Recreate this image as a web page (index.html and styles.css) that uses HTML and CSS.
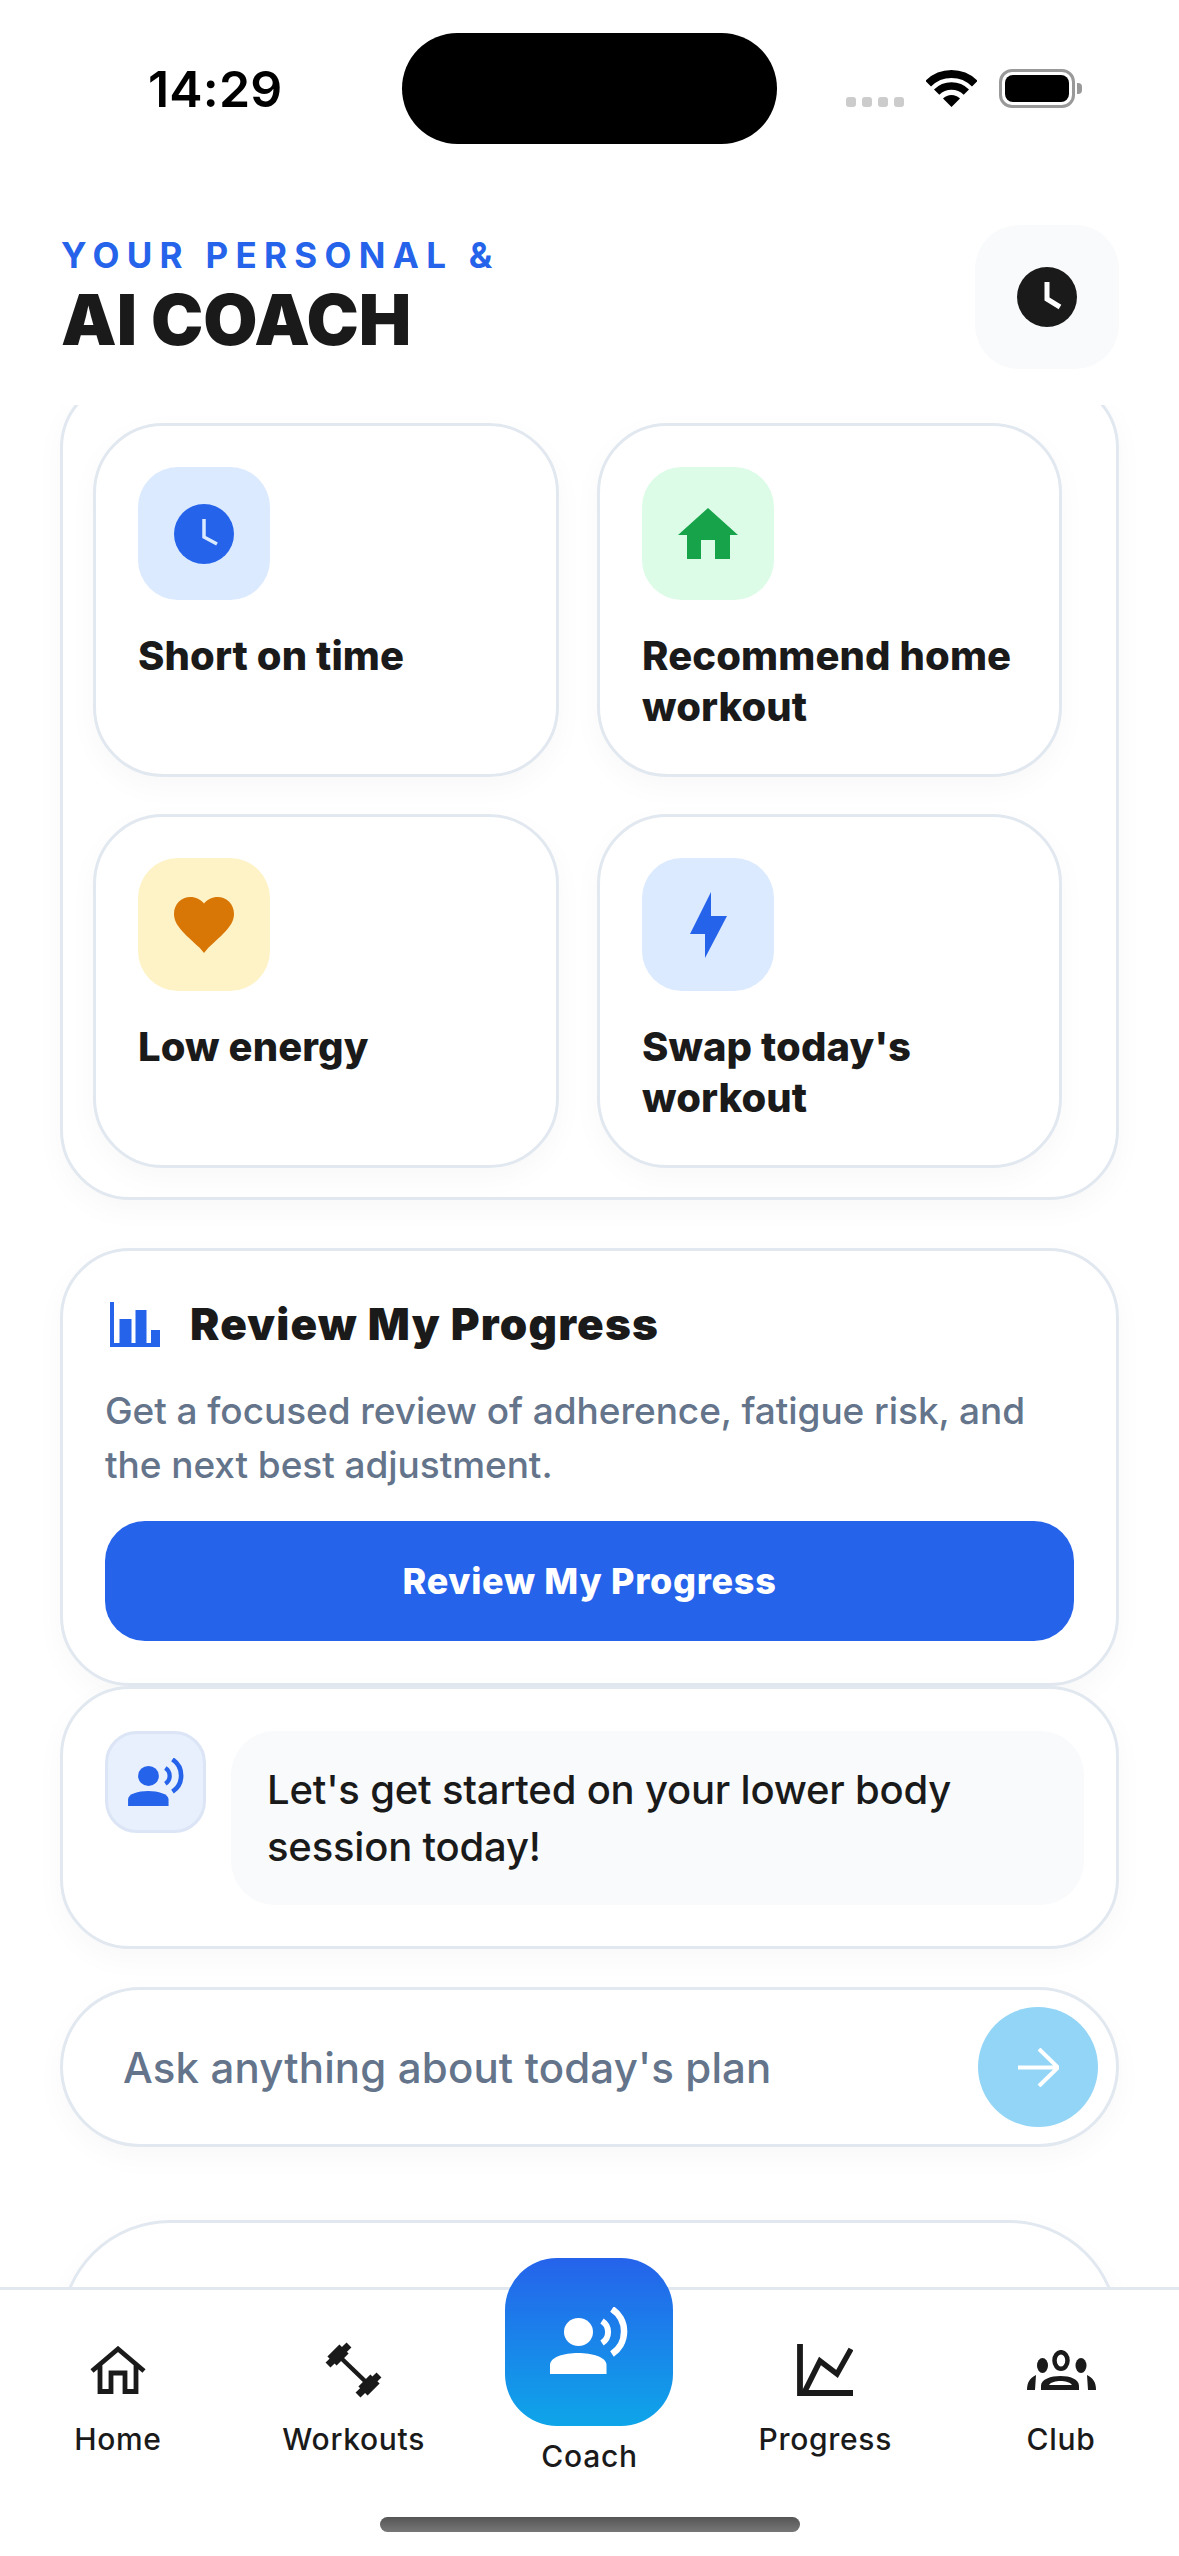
FILE: index.html
```html
<!DOCTYPE html>
<html lang="en">
  <head>
    <meta charset="utf-8">
    <title>AI Coach</title>
    <link rel="stylesheet" href="styles.css">
  </head>
  <body>
    <!-- shared person + voice waves glyph -->
    <svg class="defs" width="0" height="0">
      <symbol id="coach-glyph" viewBox="0 0 78 67">
        <ellipse cx="28.5" cy="25" rx="14.5" ry="14" fill="currentColor"/>
        <path d="M0 67V58C0 50 14 46 28 46S56.500 50 56.500 58V67Z" fill="currentColor"/>
        <path d="M52 14A13 13 0 0 1 52 36" fill="none" stroke="currentColor" stroke-width="6"/>
        <path d="M62 2A27 27 0 0 1 62 47" fill="none" stroke="currentColor" stroke-width="6.500"/>
      </symbol>
    </svg>

    <div class="phone">
      <div class="status">
        <div class="time">14:29</div>
        <div class="island"></div>
        <div class="status-icons">
          <div class="signal"><i></i><i></i><i></i><i></i></div>
          <svg class="wifi" width="51" height="37" viewBox="0 0 51 37">
            <path d="M2.200 13.700A33 33 0 0 1 48.800 13.700" fill="none" stroke="#000" stroke-width="8"/>
            <path d="M10.650 22.150A21 21 0 0 1 40.350 22.150" fill="none" stroke="#000" stroke-width="7.500"/>
            <path d="M25.500 37L17 28.500A12 12 0 0 1 34 28.500Z"/>
          </svg>
          <div class="battery"><div class="battery-fill"></div></div>
          <div class="battery-nub"></div>
        </div>
      </div>

      <div class="header">
        <div>
          <div class="eyebrow">YOUR PERSONAL &amp;</div>
          <h1 class="title">AI COACH</h1>
        </div>
        <div class="history-btn">
          <svg width="60" height="60" viewBox="0 0 60 60">
            <circle cx="30" cy="30" r="30" fill="#1a1a1a"/>
            <path d="M30 15V32L43 40" fill="none" stroke="#fff" stroke-width="5"/>
          </svg>
        </div>
      </div>

      <div class="scroll">
        <div class="panel">
          <div class="quick-grid">
            <div class="quick-card">
              <div class="tile tile-blue">
                <svg width="60" height="60" viewBox="0 0 60 60">
                  <circle cx="30" cy="30" r="30" fill="#2563eb"/>
                  <path d="M30 15V33L43 40" fill="none" stroke="#dbeafe" stroke-width="3.500"/>
                </svg>
              </div>
              <div class="quick-label">Short on time</div>
            </div>
            <div class="quick-card">
              <div class="tile tile-green">
                <svg width="60" height="51" viewBox="0 0 60 51">
                  <path d="M30 0L60 27H52V51H37V32H23V51H9V27H0Z" fill="#16a34a"/>
                </svg>
              </div>
              <div class="quick-label">Recommend home workout</div>
            </div>
            <div class="quick-card">
              <div class="tile tile-amber">
                <svg width="60" height="56" viewBox="2 3 20 18.350" preserveAspectRatio="none">
                  <path d="M12 21.350l-1.450-1.700C5.400 15 2 12.280 2 8.500 2 5.420 4.420 3 7.500 3c1.740 0 3.410.810 4.500 2.090C13.090 3.810 14.760 3 16.500 3 19.580 3 22 5.420 22 8.500c0 3.780-3.400 6.500-8.550 11.150z" fill="#d97706"/>
                </svg>
              </div>
              <div class="quick-label">Low energy</div>
            </div>
            <div class="quick-card">
              <div class="tile tile-blue">
                <svg width="37" height="66" viewBox="0 0 37 66">
                  <path d="M21 0L0 42H15V66L37 24H21Z" fill="#2563eb"/>
                </svg>
              </div>
              <div class="quick-label">Swap today's workout</div>
            </div>
          </div>
        </div>

        <div class="review-card">
          <div class="review-head">
            <svg width="50" height="45" viewBox="0 0 50 45">
              <path d="M0 0H4V41H9.500V17H21.500V41H25.500V8H36.500V41H41V28H50V45H0Z" fill="#2563eb"/>
            </svg>
            <h2 class="review-title">Review My Progress</h2>
          </div>
          <p class="review-text">Get a focused review of adherence, fatigue risk, and the next best adjustment.</p>
          <div class="review-btn">Review My Progress</div>
        </div>

        <div class="chat-card">
          <div class="avatar">
            <svg width="56" height="48"><use href="#coach-glyph"/></svg>
          </div>
          <div class="bubble">Let's get started on your lower body session today!</div>
        </div>

        <div class="ask-box">
          <div class="ask-text">Ask anything about today's plan</div>
          <div class="send-btn">
            <svg width="41" height="39" viewBox="0 0 41 39">
              <path d="M0 19.500H39M21 1L40 19.500L21 38" fill="none" stroke="#fff" stroke-width="4"/>
            </svg>
          </div>
        </div>

        <div class="next-card"></div>
      </div>

      <div class="nav">
        <div class="nav-items">
          <div class="nav-item">
            <div class="nav-icon">
              <svg width="56" height="48" viewBox="0 0 56 48">
                <path d="M2 25L28 3L54 25M10 19V45.500H21V27H35V45.500H46V19" fill="none" stroke="#1a1a1a" stroke-width="4.800"/>
              </svg>
            </div>
            <div class="nav-label">Home</div>
          </div>
          <div class="nav-item">
            <div class="nav-icon">
              <svg width="57" height="56" viewBox="0 0 57 56">
                <g fill="none" stroke="#1a1a1a">
                  <path d="M16 16L41 40" stroke-width="4.500"/>
                  <path d="M7 19L19 7" stroke-width="13"/>
                  <path d="M3 23L24 3" stroke-width="7"/>
                  <path d="M50 37L38 49" stroke-width="13"/>
                  <path d="M54 33L33 53" stroke-width="7"/>
                </g>
              </svg>
            </div>
            <div class="nav-label">Workouts</div>
          </div>
          <div class="nav-item nav-coach">
            <div class="coach-tile">
              <svg width="78" height="67"><use href="#coach-glyph"/></svg>
            </div>
            <div class="nav-label">Coach</div>
          </div>
          <div class="nav-item">
            <div class="nav-icon">
              <svg width="56" height="52" viewBox="0 0 56 52">
                <path d="M3 0V49H56" fill="none" stroke="#1a1a1a" stroke-width="5.800"/>
                <path d="M8 47L23 17L40 30L54 5" fill="none" stroke="#1a1a1a" stroke-width="5.500"/>
              </svg>
            </div>
            <div class="nav-label">Progress</div>
          </div>
          <div class="nav-item">
            <div class="nav-icon">
              <svg width="69" height="40" viewBox="0 0 69 40">
                <ellipse cx="34" cy="10.500" rx="6.500" ry="8.300" fill="none" stroke="#1a1a1a" stroke-width="4.500"/>
                <ellipse cx="15.500" cy="15.500" rx="5.500" ry="7.500" fill="#1a1a1a"/>
                <ellipse cx="54" cy="15.500" rx="5.500" ry="7.500" fill="#1a1a1a"/>
                <path fill-rule="evenodd" d="M14 40V36C14 29 24 26 33.500 26S52 29 52 36V40ZM22 35H45C43 32 38 31 33.500 31S24 32 22 35Z" fill="#1a1a1a"/>
                <path d="M0 40C0 32 3 28 9 25L8 40ZM69 40C69 32 66 28 60 25L61 40Z" fill="#1a1a1a"/>
              </svg>
            </div>
            <div class="nav-label">Club</div>
          </div>
        </div>
        <div class="home-bar"></div>
      </div>
    </div>
  </body>
</html>
```

FILE: styles.css
```css
* {
  box-sizing: border-box;
}

body {
  margin: 0;
  background: #fff;
  color: #1a1a1a;
  font-family: Inter, "Liberation Sans", sans-serif;
}

.defs {
  display: block;
}

.phone {
  display: flex;
  flex-direction: column;
  width: 1179px;
  height: 2556px;
  overflow: hidden;
  background: #fff;
}

/* status bar */
.status {
  display: flex;
  align-items: center;
  flex-shrink: 0;
  height: 111px;
  margin-top: 33px;
}

.time {
  width: 402px;
  padding-left: 148px;
  color: #000;
  font-size: 50px;
  font-weight: 600;
  letter-spacing: 0.2px;
}

.island {
  width: 375px;
  height: 111px;
  border-radius: 56px;
  background: #000;
}

.status-icons {
  display: flex;
  align-items: center;
  margin-left: 69px;
}

.signal {
  display: flex;
  gap: 6px;
  align-self: flex-end;
  margin-right: 22px;
  margin-bottom: 1px;
}

.signal i {
  display: block;
  width: 10px;
  height: 10px;
  border-radius: 3px;
  background: #ccc;
}

.battery {
  width: 76px;
  height: 39px;
  margin-left: 22px;
  padding: 3px;
  border: 3px solid #999;
  border-radius: 13px;
}

.battery-fill {
  height: 100%;
  border-radius: 8px;
  background: #000;
}

.battery-nub {
  width: 5px;
  height: 11px;
  margin-left: 2px;
  border-radius: 0 4px 4px 0;
  background: #999;
}

/* header */
.header {
  display: flex;
  justify-content: space-between;
  flex-shrink: 0;
  padding: 81px 60px 36px 61px;
}

.eyebrow {
  margin-top: 10px;
  color: #2563eb;
  font-size: 35px;
  font-weight: 700;
  line-height: 40px;
  letter-spacing: 7.300px;
}

.title {
  margin: 7px 0 0;
  font-size: 70px;
  font-weight: 900;
  line-height: 76px;
  letter-spacing: 0;
}

.history-btn {
  display: flex;
  align-items: center;
  justify-content: center;
  width: 144px;
  height: 144px;
  border-radius: 44px;
  background: #f8fafc;
}

/* scroll area */
.scroll {
  flex: 1;
  min-height: 0;
  overflow: hidden;
  padding: 0 60px;
}

.panel,
.review-card,
.chat-card,
.ask-box,
.next-card {
  border: 3px solid #e2e8f0;
  background: #fff;
  box-shadow: 0 10px 30px rgba(15, 23, 42, 0.03);
}

.panel {
  margin-top: -27px;
  padding: 42px 0 29px 30px;
  border-radius: 70px;
}

.quick-grid {
  display: grid;
  grid-template-columns: 466px 465px;
  grid-auto-rows: 354px;
  gap: 37px 38px;
}

.quick-card {
  padding: 41px 30px 41px 42px;
  border: 3px solid #e2e8f0;
  border-radius: 70px;
  background: #fff;
  box-shadow: 0 10px 30px rgba(15, 23, 42, 0.03);
}

.tile {
  display: flex;
  align-items: center;
  justify-content: center;
  width: 132px;
  height: 133px;
  border-radius: 40px;
}

.tile-blue {
  background: #dbeafe;
}

.tile-green {
  background: #dcfce7;
}

.tile-amber {
  background: #fef3c7;
}

.quick-label {
  margin-top: 30px;
  font-size: 40px;
  font-weight: 800;
  line-height: 51px;
  letter-spacing: 0.100px;
}

.review-card {
  height: 438px;
  margin-top: 48px;
  padding: 46px 42px 0;
  border-radius: 70px;
}

.review-head {
  display: flex;
  align-items: center;
  gap: 30px;
  margin-left: 5px;
}

.review-title {
  margin: 0;
  font-size: 44px;
  font-weight: 900;
  line-height: 54px;
  letter-spacing: 1.200px;
}

.review-text {
  margin: 33px 0 0;
  color: #64748b;
  font-size: 37px;
  font-weight: 500;
  line-height: 54px;
  letter-spacing: -0.060px;
}

.review-btn {
  display: flex;
  align-items: center;
  justify-content: center;
  height: 120px;
  margin-top: 29px;
  border-radius: 40px;
  background: #2563eb;
  color: #fff;
  font-size: 36px;
  font-weight: 800;
  letter-spacing: 0.700px;
}

.chat-card {
  display: flex;
  gap: 25px;
  padding: 42px 32px 41px 42px;
  border-radius: 70px;
}

.avatar {
  display: flex;
  align-items: center;
  justify-content: center;
  flex-shrink: 0;
  width: 101px;
  height: 102px;
  border: 3px solid #dbe5f5;
  border-radius: 32px;
  background: #e8effd;
  color: #2563eb;
}

.bubble {
  flex: 1;
  padding: 30px 36px;
  border-radius: 44px;
  background: #f8fafc;
  font-size: 40px;
  font-weight: 500;
  line-height: 57px;
  letter-spacing: -0.200px;
}

.ask-box {
  display: flex;
  align-items: center;
  justify-content: space-between;
  height: 160px;
  margin-top: 38px;
  padding: 0 18px 0 60px;
  border-radius: 80px;
}

.ask-text {
  color: #64748b;
  font-size: 42px;
  font-weight: 500;
  letter-spacing: 0.150px;
}

.send-btn {
  display: flex;
  align-items: center;
  justify-content: center;
  width: 120px;
  height: 120px;
  border-radius: 50%;
  background: #93d5f6;
}

.next-card {
  height: 300px;
  margin-top: 73px;
  border-radius: 110px;
}

/* bottom nav */
.nav {
  position: relative;
  display: flex;
  flex-direction: column;
  flex-shrink: 0;
  height: 269px;
  border-top: 3px solid #e2e8f0;
  background: #fff;
}

.nav-items {
  display: grid;
  grid-template-columns: repeat(5, 1fr);
  align-items: start;
  padding-top: 50px;
}

.nav-item {
  display: flex;
  flex-direction: column;
  align-items: center;
}

.nav-icon {
  display: flex;
  align-items: center;
  justify-content: center;
  height: 60px;
}

.nav-label {
  margin-top: 21px;
  font-size: 30px;
  font-weight: 500;
  line-height: 36px;
  letter-spacing: 0.700px;
}

.nav-coach {
  margin-top: -82px;
}

.nav-coach .nav-label {
  margin-top: 12px;
}

.coach-tile {
  display: flex;
  align-items: center;
  justify-content: center;
  width: 168px;
  height: 168px;
  padding-bottom: 3px;
  border-radius: 52px;
  background: linear-gradient(180deg, #2563eb, #0ea5e9);
  color: #fff;
}

.home-bar {
  align-self: center;
  width: 420px;
  height: 15px;
  margin-top: auto;
  margin-bottom: 24px;
  border-radius: 8px;
  background: linear-gradient(180deg, #555, #777);
}
```
